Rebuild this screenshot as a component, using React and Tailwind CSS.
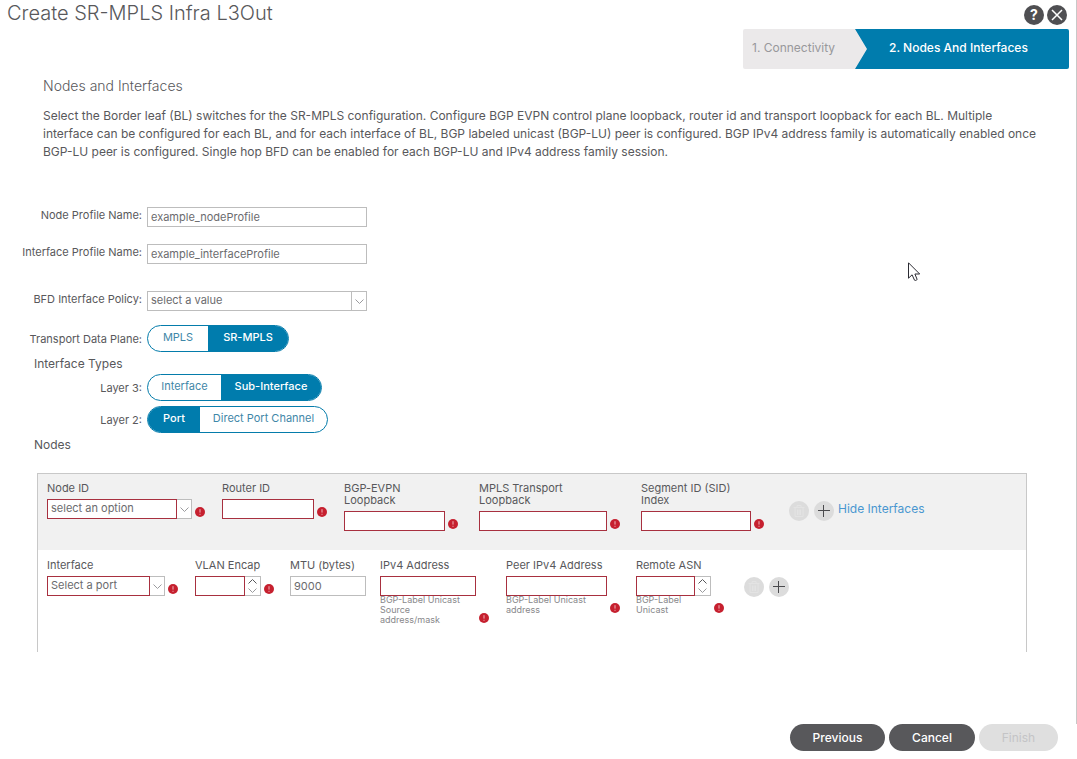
import { useState } from "react";
import clsx from "clsx";

const INPUT =
  "h-5 min-w-0 bg-white border px-[3px] text-[11px] leading-4 rounded-none appearance-none focus:outline-none";

function ErrorBadge() {
  return (
    <svg width="10" height="10" viewBox="0 0 10 10" className="shrink-0 mb-0.5" aria-hidden="true">
      <circle cx="5" cy="5" r="5" fill="#c6202f" />
      <path d="M5 2.2v3.4M5 6.8v1" stroke="#f0b4ba" strokeWidth="1" />
    </svg>
  );
}

function Chevron({ up, color = "#9b9b9e" }) {
  return (
    <svg width="9" height="5" viewBox="0 0 9 5" fill="none" stroke={color} aria-hidden="true">
      <path d={up ? "M0.5 4.5 4.5 0.5l4 4" : "M0.5 0.5l4 4 4-4"} />
    </svg>
  );
}

function SelectBox({ id, placeholder, invalid }) {
  return (
    <div className="flex w-full">
      <select
        id={id}
        className={clsx(
          INPUT,
          "flex-1 pb-0.5 text-[#6b6b6e]",
          invalid ? "border-[#a8303f]" : "border-[#bdbdbd]"
        )}
      >
        <option>{placeholder}</option>
      </select>
      <span className="w-[15px] h-5 flex items-center justify-center bg-white border border-l-0 border-[#bdbdbd]">
        <Chevron />
      </span>
    </div>
  );
}

function Stepper({ id }) {
  return (
    <div className="flex w-full">
      <input id={id} className={clsx(INPUT, "w-0 flex-1 border-[#a8303f]")} />
      <span className="w-4 h-5 flex flex-col items-center justify-center gap-1 bg-white border border-l-0 border-[#bdbdbd]">
        <Chevron up color="#58585b" />
        <Chevron />
      </span>
    </div>
  );
}

function Field({ id, label, hint, column, width, invalid = true, children }) {
  return (
    <div className={clsx("shrink-0", column)}>
      <label
        htmlFor={id}
        className="block mb-[5px] text-[11px] leading-3 text-[#58585b] whitespace-pre-line"
      >
        {label}
      </label>
      <div className="flex items-end gap-[3px]">
        <div className={width}>
          {children || (
            <input id={id} className={clsx(INPUT, "block w-full border-[#a8303f]")} />
          )}
          {hint && (
            <p className="-mt-px max-w-[86px] text-[9px] leading-[10px] text-[#88888b]">{hint}</p>
          )}
        </div>
        {invalid && <ErrorBadge />}
      </div>
    </div>
  );
}

function RowActions() {
  return (
    <div className="flex gap-[5px]">
      <button
        disabled
        aria-label="Delete"
        className="size-5 rounded-full bg-[#dcdcdc] flex items-center justify-center"
      >
        <svg width="12" height="12" viewBox="0 0 12 12" fill="none" stroke="#e3e3e3">
          <path d="M0.5 2.5h11M4 2V0.5h4V2M2 3v8.5h8V3M4.5 4.5v5.5M6 4.5v5.5M7.5 4.5v5.5" />
        </svg>
      </button>
      <button
        aria-label="Add"
        className="size-5 rounded-full bg-[#dcdcdc] flex items-center justify-center"
      >
        <svg width="12" height="12" viewBox="0 0 12 12" stroke="#4a4a4d">
          <path d="M5.5 0v12M0 5.5h12" />
        </svg>
      </button>
    </div>
  );
}

function Toggle({ label, options, initial }) {
  const [value, setValue] = useState(initial);

  return (
    <div
      role="group"
      aria-label={label}
      className="flex h-[27px] border border-[#047cab] rounded-full overflow-hidden"
    >
      {options.map((option) => (
        <button
          key={option.name}
          aria-pressed={value === option.name}
          onClick={() => setValue(option.name)}
          className={clsx(
            "pb-0.5 text-[11px] whitespace-nowrap",
            option.width,
            value === option.name ? "bg-[#007cad] text-white font-medium" : "text-[#3f87a8]"
          )}
        >
          {option.name}
        </button>
      ))}
    </div>
  );
}

function FormRow({ id, label, className, children }) {
  return (
    <div className={clsx("flex gap-[5px]", className)}>
      <label
        htmlFor={id}
        className="w-[142px] shrink-0 text-right text-[11px] leading-4 whitespace-nowrap"
      >
        {label}
      </label>
      {children}
    </div>
  );
}

function App() {
  const [nodeProfile, setNodeProfile] = useState("example_nodeProfile");
  const [interfaceProfile, setInterfaceProfile] = useState("example_interfaceProfile");

  return (
    <div className="bg-white text-[#58585b] font-['Inter','Liberation_Sans',sans-serif]">
      <div className="border-r border-[#c8c8c8] pb-[72px]">
        {/* Title bar */}
        <header className="flex justify-between pl-[7px] pr-[9px] h-[29px]">
          <h1 className="text-[20px] leading-[26px] font-light">Create SR-MPLS Infra L3Out</h1>
          <div className="flex gap-[3px] pt-[5px]">
            <button
              aria-label="Help"
              className="size-5 rounded-full bg-[#4f4f52] text-white text-[14px] leading-5 font-bold"
            >
              ?
            </button>
            <button
              aria-label="Close"
              className="size-5 rounded-full bg-[#4f4f52] flex items-center justify-center"
            >
              <svg width="12" height="12" viewBox="0 0 12 12" stroke="#fff" strokeWidth="1.5">
                <path d="M1 1l10 10M11 1l-10 10" />
              </svg>
            </button>
          </div>
        </header>

        {/* Wizard steps */}
        <nav className="flex justify-end pr-[7px] h-10 text-[12px]">
          <button className="w-[124px] pl-[9px] pr-5 pb-0.5 text-left bg-[#ebe9ea] text-[#98989b] whitespace-nowrap rounded-l-xs">
            1. Connectivity
          </button>
          <button
            aria-current="step"
            className="-ml-3 w-[214px] pl-[34px] pb-0.5 text-left bg-[#007cad] text-white font-medium whitespace-nowrap rounded-r-xs [clip-path:polygon(0_0,100%_0,100%_100%,0_100%,12px_50%)]"
          >
            2. Nodes And Interfaces
          </button>
        </nav>

        <section className="pl-[43px] pr-8 pt-2">
          <h2 className="text-[14px] leading-[18px] font-light">Nodes and Interfaces</h2>
          <p className="mt-3 text-[12px] leading-[18px]">
            Select the Border leaf (BL) switches for the SR-MPLS configuration. Configure BGP EVPN
            control plane loopback, router id and transport loopback for each BL. Multiple interface
            can be configured for each BL, and for each interface of BL, BGP labeled unicast
            (BGP-LU) peer is configured. BGP IPv4 address family is automatically enabled once
            BGP-LU peer is configured. Single hop BFD can be enabled for each BGP-LU and IPv4
            address family session.
          </p>
        </section>

        {/* Profile form */}
        <section className="pt-[46px]">
          <FormRow id="nodeProfile" label="Node Profile Name:">
            <input
              id="nodeProfile"
              value={nodeProfile}
              onChange={(e) => setNodeProfile(e.target.value)}
              className={clsx(INPUT, "w-[220px] pb-px border-[#bdbdbd] text-[#6b6b6e]")}
            />
          </FormRow>
          <FormRow id="interfaceProfile" label="Interface Profile Name:" className="mt-[17px]">
            <input
              id="interfaceProfile"
              value={interfaceProfile}
              onChange={(e) => setInterfaceProfile(e.target.value)}
              className={clsx(INPUT, "w-[220px] pb-px border-[#bdbdbd] text-[#6b6b6e]")}
            />
          </FormRow>
          <FormRow id="bfdPolicy" label="BFD Interface Policy:" className="mt-[27px]">
            <div className="w-[220px]">
              <SelectBox id="bfdPolicy" placeholder="select a value" />
            </div>
          </FormRow>
          <FormRow label="Transport Data Plane:" className="mt-3.5 items-center">
            <Toggle
              label="Transport Data Plane"
              options={[
                { name: "MPLS", width: "w-[60px]" },
                { name: "SR-MPLS", width: "w-20" },
              ]}
              initial="SR-MPLS"
            />
          </FormRow>
          <h3 className="pl-[34px] pt-0.5 text-[12px] leading-5">Interface Types</h3>
          <FormRow label="Layer 3:" className="items-center">
            <Toggle
              label="Layer 3"
              options={[
                { name: "Interface", width: "w-[73px]" },
                { name: "Sub-Interface", width: "w-[100px]" },
              ]}
              initial="Sub-Interface"
            />
          </FormRow>
          <FormRow label="Layer 2:" className="mt-[5px] items-center">
            <Toggle
              label="Layer 2"
              options={[
                { name: "Port", width: "w-[52px]" },
                { name: "Direct Port Channel", width: "w-[127px]" },
              ]}
              initial="Port"
            />
          </FormRow>
          <h3 className="pl-[34px] pt-0.5 text-[12px] leading-5">Nodes</h3>
        </section>

        {/* Nodes */}
        <section className="mt-[18px] ml-[37px] mr-[49px] border border-b-0 border-[#c8c8c8]">
          <div className="flex h-[76px] pl-[9px] pt-2 bg-[#f1f1f1]">
            <Field id="nodeId" label="Node ID" column="w-[175px]" width="w-[145px]">
              <SelectBox id="nodeId" placeholder="select an option" invalid />
            </Field>
            <Field id="routerId" label="Router ID" column="w-[122px]" width="w-[92px]" />
            <Field
              id="evpnLoopback"
              label={"BGP-EVPN\nLoopback"}
              column="w-[135px]"
              width="w-[101px]"
            />
            <Field
              id="mplsLoopback"
              label={"MPLS Transport\nLoopback"}
              column="w-[162px]"
              width="w-[128px]"
            />
            <Field
              id="sidIndex"
              label={"Segment ID (SID)\nIndex"}
              column="w-[148px]"
              width="w-[110px]"
            />
            <div className="flex gap-1 pt-[19px]">
              <RowActions />
              <a href="#interfaces" className="text-[12px] leading-4 text-[#4a97d0]">
                Hide Interfaces
              </a>
            </div>
          </div>

          <div id="interfaces" className="flex h-[102px] pl-[9px] pt-[9px]">
            <Field id="port" label="Interface" column="w-[148px]" width="w-[118px]">
              <SelectBox id="port" placeholder="Select a port" invalid />
            </Field>
            <Field id="vlan" label="VLAN Encap" column="w-[95px]" width="w-[66px]">
              <Stepper id="vlan" />
            </Field>
            <Field
              id="mtu"
              label="MTU (bytes)"
              column="w-[90px]"
              width="w-[76px]"
              invalid={false}
            >
              <input
                id="mtu"
                defaultValue="9000"
                className={clsx(INPUT, "block w-full pb-px border-[#bdbdbd] text-[#6b6b6e]")}
              />
            </Field>
            <Field
              id="ipv4"
              label="IPv4 Address"
              hint="BGP-Label Unicast Source address/mask"
              column="w-[126px]"
              width="w-[96px]"
            />
            <Field
              id="peerIpv4"
              label="Peer IPv4 Address"
              hint="BGP-Label Unicast address"
              column="w-[130px]"
              width="w-[101px]"
            />
            <Field
              id="remoteAsn"
              label="Remote ASN"
              hint="BGP-Label Unicast"
              column="w-[108px]"
              width="w-[75px]"
            >
              <Stepper id="remoteAsn" />
            </Field>
            <div className="pt-[18px]">
              <RowActions />
            </div>
          </div>
        </section>
      </div>

      <footer className="flex justify-end gap-1 pr-[19px] pb-2 text-[12px] font-medium">
        <button className="h-[27px] w-[95px] rounded-full bg-[#58585b] text-white">Previous</button>
        <button className="h-[27px] w-[86px] rounded-full bg-[#58585b] text-white">Cancel</button>
        <button
          disabled
          className="h-[27px] w-[79px] rounded-full bg-[#dfdfdf] text-[#c4c4c6] font-normal"
        >
          Finish
        </button>
      </footer>

      {/* Pointer */}
      <svg
        width="13"
        height="20"
        viewBox="0 0 13 20"
        className="absolute left-[908px] top-[262px] pointer-events-none"
        aria-hidden="true"
      >
        <path
          d="M0.5 0.8v15.4l3.6-3.4 2.4 5.4c1 .6 2.4 0 2.6-.9L6.9 12h4.8z"
          fill="#fff"
          stroke="#2b2b33"
        />
      </svg>
    </div>
  );
}

export default App;
